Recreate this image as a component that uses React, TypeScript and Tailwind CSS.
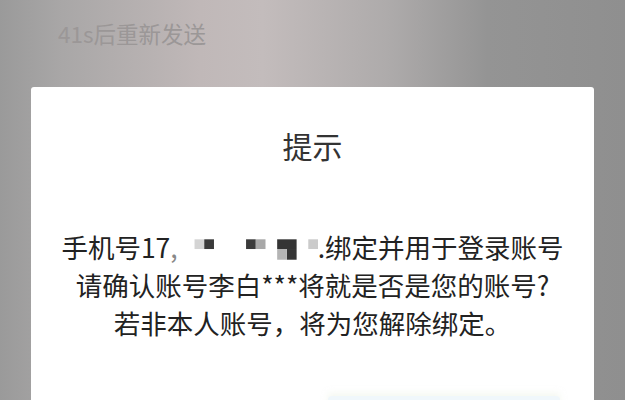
const FONT = { fontFamily: '"Noto Sans CJK SC", "Noto Sans", sans-serif' };

function Redacted() {
  // pixelated mask over the phone number
  return (
    <svg width="140" height="22" viewBox="0 0 144 22" className="inline-block align-[-3px]">
      <rect x="17" y="0" width="10" height="10" fill="#d4d4d4" />
      <rect x="27" y="0" width="10" height="10" fill="#3a3a3a" />
      <rect x="70" y="0" width="10" height="10" fill="#3a3a3a" />
      <rect x="80" y="0" width="10" height="10" fill="#a8a8a8" />
      <rect x="102" y="0" width="20" height="10" fill="#353535" />
      <rect x="112" y="10" width="10" height="11" fill="#353535" />
      <rect x="102" y="10" width="10" height="11" fill="#b4b4b4" />
      <rect x="134" y="0" width="10" height="10" fill="#cbcbcb" />
    </svg>
  );
}

export default function App() {
  return (
    <div
      className="relative h-[400px] w-[625px] overflow-hidden bg-[linear-gradient(90deg,#9a9a9a_0%,#a9a7a7_10%,#c0b8b8_32%,#c3bcbc_42%,#aeabab_62%,#949494_78%,#8f8f8f_100%)]"
      style={FONT}
    >
      <div className="pl-[58px] pt-[18px] text-[22.5px] leading-[30px] text-[#9b9797]">41s后重新发送</div>

      <div className="mx-[31px] mt-[39px] flex flex-col items-center rounded-t-[3px] bg-white pt-[40px]">
        <h2 className="text-[30px] leading-[36px] text-[#333]">提示</h2>

        <div className="mt-[65px] flex flex-col items-center text-[26.5px] leading-[38px] text-[#222]">
          <p className="whitespace-nowrap">
            手机号17<span className="text-[#888]">,</span>
            <Redacted />
            .绑定并用于登录账号
          </p>
          <p className="whitespace-nowrap">请确认账号李白***将就是否是您的账号?</p>
          <p className="whitespace-nowrap">若非本人账号，将为您解除绑定。</p>
        </div>

        <div className="mt-[54px] flex w-full justify-end pr-[34px]">
          <div className="h-[40px] w-[232px] rounded-[4px] bg-[#f0f7fb] shadow-[0_-3px_6px_rgba(235,242,228,0.5)]" />
        </div>
      </div>
    </div>
  );
}
